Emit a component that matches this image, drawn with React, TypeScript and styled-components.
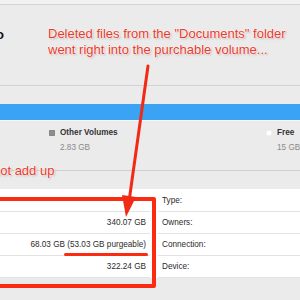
import React from "react";
import styled, { createGlobalStyle } from "styled-components";

const GlobalStyle = createGlobalStyle`
  html, body {
    margin: 0;
    padding: 0;
    background: #ebebeb;
  }
`;

const Page = styled.div`
  position: relative;
  width: 300px;
  height: 300px;
  overflow: hidden;
  background: #ebebeb;
  font-family: "Liberation Sans", Arial, sans-serif;
  color: #2b2b2b;
`;

const TopStrip = styled.div`
  height: 4px;
  background: #f2f2f2;
  border-bottom: 1px solid #d3d3d3;
`;

const Header = styled.div`
  box-sizing: border-box;
  height: 81px;
  padding-top: 22px;
  border-bottom: 1px solid #d3d3d3;
`;

const Title = styled.div`
  margin-left: -20px;
  font-size: 13px;
  line-height: 16px;
  font-weight: bold;
  color: #111;
  white-space: nowrap;
`;

const Usage = styled.div`
  box-sizing: border-box;
  height: 85px;
  padding-top: 18px;
  border-bottom: 1px solid #d0d0d0;
`;

const UsageBar = styled.div`
  height: 16px;
  background: #3ba3f4;
  border-bottom: 1px solid #f6f6f6;
`;

const Legend = styled.div`
  display: flex;
  padding-left: 49px;
  margin-top: 7px;
`;

const LegendItem = styled.div`
  display: grid;
  grid-template-columns: 6px auto;
  column-gap: 5px;
  align-items: center;
  width: 217px;
  flex-shrink: 0;
`;

const Swatch = styled.span<{ $color: string }>`
  width: 6px;
  height: 6px;
  border-radius: 1px;
  background: ${(p) => p.$color};
  box-shadow: inset 0 0 0 0.5px rgba(0, 0, 0, 0.12);
`;

const LegendLabel = styled.span`
  font-size: 8.2px;
  line-height: 10px;
  font-weight: bold;
  color: #333;
  white-space: nowrap;
`;

const LegendValue = styled.span`
  grid-column: 2;
  margin-top: 5px;
  font-size: 8.2px;
  line-height: 10px;
  color: #8a8a8a;
  white-space: nowrap;
`;

const Details = styled.div`
  display: grid;
  grid-template-columns: 150px 1fr;
  column-gap: 8px;
  margin-top: 18px;
  padding-top: 1px;
  background: #fff;
`;

const Column = styled.div`
  display: flex;
  flex-direction: column;
`;

const Row = styled.div<{ $align: "left" | "right" }>`
  box-sizing: border-box;
  height: 22px;
  display: flex;
  align-items: center;
  justify-content: ${(p) => (p.$align === "right" ? "flex-end" : "flex-start")};
  padding: ${(p) => (p.$align === "right" ? "0 4px 0 0" : "0 0 0 4px")};
  border-bottom: 1px solid #e2e2e2;
  font-size: 8.2px;
  color: #2b2b2b;
  white-space: nowrap;
`;

const Note = styled.div<{ $left: number; $top: number }>`
  position: absolute;
  left: ${(p) => p.$left}px;
  top: ${(p) => p.$top}px;
  font-size: 13px;
  line-height: 16px;
  color: #e63a2a;
  white-space: nowrap;
  text-shadow: 0 0 1px #fff, 0 0 2px #fff, 0 0 2px #fff,
    1px 1px 2px rgba(120, 0, 0, 0.35);
`;

const HighlightBox = styled.div`
  position: absolute;
  left: -10px;
  top: 197px;
  width: 166px;
  height: 91px;
  box-sizing: border-box;
  border: 4.5px solid #fb2b12;
  border-radius: 2px;
`;

const Underline = styled.div`
  position: absolute;
  left: 64px;
  top: 253px;
  width: 84px;
  height: 3px;
  border-radius: 2px;
  background: #fb2b12;
`;

const ArrowLayer = styled.svg`
  position: absolute;
  left: 0;
  top: 0;
  pointer-events: none;
`;

const leftValues = ["", "340.07 GB", "68.03 GB (53.03 GB purgeable)", "322.24 GB"];
const rightLabels = ["Type:", "Owners:", "Connection:", "Device:"];

export default function App() {
  return (
    <Page>
      <GlobalStyle />
      <TopStrip />
      <Header>
        <Title>Info</Title>
      </Header>
      <Usage>
        <UsageBar />
        <Legend>
          <LegendItem>
            <Swatch $color="#8e8e8e" />
            <LegendLabel>Other Volumes</LegendLabel>
            <LegendValue>2.83 GB</LegendValue>
          </LegendItem>
          <LegendItem>
            <Swatch $color="#ffffff" />
            <LegendLabel>Free</LegendLabel>
            <LegendValue>15 GB</LegendValue>
          </LegendItem>
        </Legend>
      </Usage>
      <Details>
        <Column>
          {leftValues.map((v, i) => (
            <Row key={i} $align="right">
              {v}
            </Row>
          ))}
        </Column>
        <Column>
          {rightLabels.map((l) => (
            <Row key={l} $align="left">
              {l}
            </Row>
          ))}
        </Column>
      </Details>

      <Note $left={48} $top={26}>
        Deleted files from the "Documents" folder
        <br />
        went right into the purchable volume...
      </Note>
      <Note $left={-41} $top={163}>
        Does not add up
      </Note>
      <HighlightBox />
      <Underline />
      <ArrowLayer width="300" height="300" viewBox="0 0 300 300">
        <line
          x1="148"
          y1="66"
          x2="129.5"
          y2="198"
          stroke="#f02a14"
          strokeWidth="3"
          strokeLinecap="round"
        />
        <polygon points="126,217 136,197 122,195" fill="#f02a14" />
      </ArrowLayer>
    </Page>
  );
}
